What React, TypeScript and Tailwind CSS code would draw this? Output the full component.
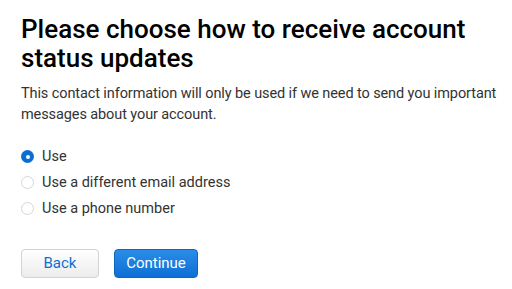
import { useState } from "react";

const options = [
  { id: "use", label: "Use" },
  { id: "email", label: "Use a different email address" },
  { id: "phone", label: "Use a phone number" },
];

export default function App() {
  const [selected, setSelected] = useState("use");

  return (
    <div className="w-[512px] h-[289px] bg-white text-[#111] font-['Roboto','Liberation_Sans',sans-serif] pl-[21px] pr-2 pt-[15px]">
      <h1 className="text-[26px] leading-[29px] font-medium text-black">
        Please choose how to receive account status updates
      </h1>
      <p className="mt-[10px] text-[14.5px] leading-[21px] tracking-[-0.1px] text-[#333]">
        This contact information will only be used if we need to send you important messages about your account.
      </p>
      <ul className="mt-[21px] flex flex-col gap-[5px]">
        {options.map((item) => (
          <li
            key={item.id}
            className="flex items-center gap-[8px] h-[21px] cursor-pointer"
            onClick={() => setSelected(item.id)}
          >
            {selected === item.id ? (
              <span className="w-[13px] h-[13px] rounded-full bg-[#0a6fd3] flex items-center justify-center">
                <span className="w-[4px] h-[4px] rounded-full bg-white" />
              </span>
            ) : (
              <span className="w-[13px] h-[13px] rounded-full border border-[#d6d6d6] bg-white" />
            )}
            <span className="text-[14.5px] text-[#333]">{item.label}</span>
          </li>
        ))}
      </ul>
      <div className="mt-[30px] flex gap-[15px]">
        <button className="w-[78px] h-[29px] rounded-[4px] border border-[#d3d3d3] bg-gradient-to-b from-white to-[#ececec] text-[#0a70d0] text-[15px]">
          Back
        </button>
        <button className="w-[84px] h-[29px] rounded-[4px] border border-[#0e66c4] bg-gradient-to-b from-[#2a8ce8] to-[#0b6fd4] text-white text-[15px]">
          Continue
        </button>
      </div>
    </div>
  );
}
